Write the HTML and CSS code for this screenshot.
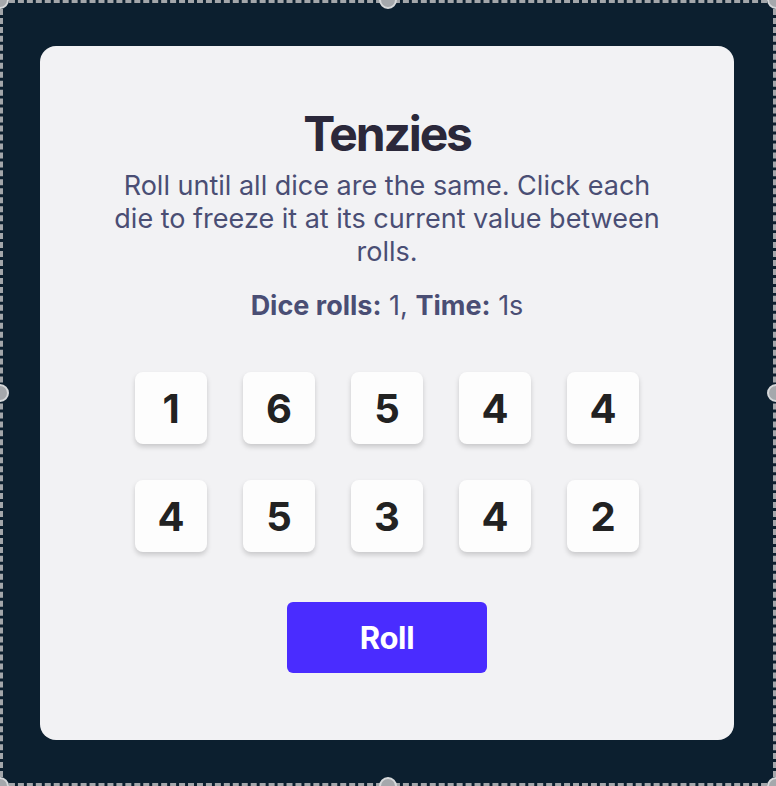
FILE: index.html
```html
<!DOCTYPE html>
<html lang="en">
<head>
<meta charset="utf-8">
<title>Tenzies</title>
<link rel="stylesheet" href="styles.css">
</head>
<body>
<div class="frame">
  <main class="card">
    <h1 class="title">Tenzies</h1>
    <p class="instructions">Roll until all dice are the same. Click each die to freeze it at its current value between rolls.</p>
    <p class="stats"><strong>Dice rolls:</strong> 1, <strong>Time:</strong> 1s</p>
    <div class="dice">
      <button class="die">1</button>
      <button class="die">6</button>
      <button class="die">5</button>
      <button class="die">4</button>
      <button class="die">4</button>
      <button class="die">4</button>
      <button class="die">5</button>
      <button class="die">3</button>
      <button class="die">4</button>
      <button class="die">2</button>
    </div>
    <button class="roll">Roll</button>
  </main>
  <span class="handle h-tl"></span>
  <span class="handle h-tc"></span>
  <span class="handle h-tr"></span>
  <span class="handle h-ml"></span>
  <span class="handle h-mr"></span>
  <span class="handle h-bl"></span>
  <span class="handle h-bc"></span>
  <span class="handle h-br"></span>
</div>
</body>
</html>
```
FILE: styles.css
```css
* { box-sizing: border-box; }
html, body { margin: 0; padding: 0; }
body {
  background: #0c1f2f;
  font-family: Inter, "Noto Sans", sans-serif;
}
.frame {
  position: relative;
  width: 776px;
  height: 786px;
  border: 3px dashed #a3a6aa;
  display: flex;
  align-items: center;
  justify-content: center;
}
.card {
  width: 694px;
  height: 694px;
  margin-left: -2px;
  background: #f2f2f4;
  border-radius: 16px;
  display: flex;
  flex-direction: column;
  align-items: center;
  padding: 59px 60px 0;
}
.title {
  margin: 0;
  font-size: 48px;
  font-weight: 700;
  letter-spacing: -0.045em;
  line-height: 58px;
  color: #2b283a;
}
.instructions {
  margin: 6px 0 0;
  font-size: 27px;
  line-height: 33px;
  color: #4a4e74;
  text-align: center;
  max-width: 560px;
}
.stats {
  margin: 21px 0 0;
  font-size: 27px;
  line-height: 33px;
  color: #4a4e74;
}
.stats strong { font-weight: 700; }
.dice {
  margin-top: 50px;
  display: grid;
  grid-template-columns: repeat(5, 72px);
  grid-auto-rows: 72px;
  gap: 36px;
}
.die {
  border: none;
  background: #fdfdfd;
  border-radius: 8px;
  box-shadow: 0 3px 5px rgba(0, 0, 0, 0.17);
  font-family: Inter, "Noto Sans", sans-serif;
  font-weight: 700;
  font-size: 40px;
  color: #222222;
  padding: 0;
}
.roll {
  margin-top: 50px;
  width: 200px;
  height: 71px;
  border: none;
  border-radius: 6px;
  background: #4a2cff;
  color: #ffffff;
  font-family: Inter, "Noto Sans", sans-serif;
  font-weight: 700;
  font-size: 31px;
  letter-spacing: -0.01em;
}
.handle {
  position: absolute;
  width: 18px;
  height: 18px;
  border-radius: 50%;
  background: #a5a8ac;
  border: 2px solid #d6d8da;
}
.h-tl { left: -12px; top: -12px; }
.h-tc { left: 376px; top: -12px; }
.h-tr { right: -12px; top: -12px; }
.h-ml { left: -12px; top: 381px; }
.h-mr { right: -12px; top: 381px; }
.h-bl { left: -12px; bottom: -12px; }
.h-bc { left: 376px; bottom: -12px; }
.h-br { right: -12px; bottom: -12px; }
```
